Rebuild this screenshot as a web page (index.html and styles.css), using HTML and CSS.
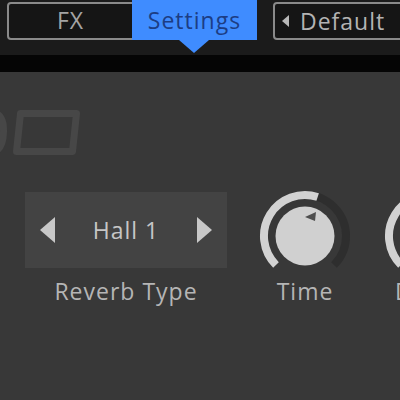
FILE: index.html
```html
<!DOCTYPE html>
<html>
<head>
<meta charset="utf-8">
<link rel="stylesheet" href="styles.css">
</head>
<body>
<div class="app">
  <header class="topbar">
    <div class="tabs">
      <div class="tab">FX</div>
      <div class="tab active">Settings</div>
    </div>
    <div class="preset"><span class="preset-arrow"></span><span class="preset-name">Default</span></div>
  </header>
  <div class="band"></div>
  <main class="panel">
    <svg class="logo" viewBox="0 0 90 50" width="90" height="50">
      <path d="M-7,6.5 Q4,6.5 3.5,25 Q3,44.5 -9,44.5" fill="none" stroke="#474747" stroke-width="7"/>
      <polygon points="20.5,6.5 76.5,6.5 72.5,44.5 16.5,44.5" fill="none" stroke="#474747" stroke-width="7" stroke-linejoin="round"/>
    </svg>
    <div class="controls">
      <div class="control reverb">
        <div class="selector">
          <span class="arrow arrow-left"></span>
          <span class="selector-value">Hall 1</span>
          <span class="arrow arrow-right"></span>
        </div>
        <div class="label">Reverb Type</div>
      </div>
      <div class="control knob">
        <svg class="knob-svg" viewBox="0 0 92 92" width="92" height="92">
          <path d="M17,75 A41,41 0 1 1 75,75" fill="none" stroke="#2e2e2e" stroke-width="8"/>
          <path d="M17,75 A41,41 0 0 1 58.67,7.01" fill="none" stroke="#d2d2d2" stroke-width="8"/>
          <circle cx="46" cy="46" r="29.5" fill="#d0d0d0"/>
          <polygon points="46,27 57,22 56,31" fill="#4e4e4e"/>
        </svg>
        <div class="label">Time</div>
      </div>
      <div class="control knob knob-next">
        <svg class="knob-svg" viewBox="0 0 92 92" width="92" height="92">
          <path d="M17,75 A41,41 0 1 1 75,75" fill="none" stroke="#2e2e2e" stroke-width="8"/>
          <path d="M17,75 A41,41 0 0 1 58.67,7.01" fill="none" stroke="#d2d2d2" stroke-width="8"/>
          <circle cx="46" cy="46" r="29.5" fill="#d0d0d0"/>
          <polygon points="46,27 57,22 56,31" fill="#4e4e4e"/>
        </svg>
        <div class="label">Decay</div>
      </div>
    </div>
  </main>
</div>
</body>
</html>
```
FILE: styles.css
```css
html, body {
  margin: 0;
  padding: 0;
}
body {
  background: #383838;
  font-family: "Open Sans", "DejaVu Sans", sans-serif;
  width: 400px;
  height: 400px;
  overflow: hidden;
}
.app {
  width: 400px;
  height: 400px;
  overflow: hidden;
}
.topbar {
  height: 55px;
  background: #1b1b1b;
  display: flex;
  align-items: flex-start;
  padding-top: 2px;
  box-sizing: border-box;
}
.tabs {
  margin-left: 7px;
  display: flex;
  align-items: flex-start;
  height: 38px;
  border: 2px solid #8a8a8a;
  border-radius: 4px;
  background: #151515;
  box-sizing: border-box;
  flex: none;
}
.tab {
  width: 123px;
  height: 34px;
  line-height: 33px;
  text-align: center;
  font-size: 23px;
  letter-spacing: 1px;
  color: #a4a4a4;
}
.tab.active {
  position: relative;
  width: 125px;
  height: 40px;
  line-height: 40px;
  margin-top: -4px;
  margin-right: -2px;
  background: #3f8cff;
  color: #1c3d84;
}
.tab.active::after {
  content: "";
  position: absolute;
  left: 50%;
  top: 100%;
  margin-left: -16px;
  border-left: 15px solid transparent;
  border-right: 15px solid transparent;
  border-top: 13px solid #3f8cff;
}
.preset {
  flex: none;
  margin-left: 16px;
  width: 160px;
  height: 38px;
  border: 2px solid #8a8a8a;
  border-radius: 4px;
  background: #151515;
  box-sizing: border-box;
  display: flex;
  align-items: center;
  padding-left: 7px;
}
.preset-arrow {
  width: 0;
  height: 0;
  border-top: 6px solid transparent;
  border-bottom: 6px solid transparent;
  border-right: 7px solid #b8b8b8;
}
.preset-name {
  margin-left: 11px;
  font-size: 23px;
  letter-spacing: 1px;
  line-height: 33px;
  color: #b3b3b3;
}
.band {
  height: 17px;
  background: #050505;
}
.panel {
  display: block;
}
.logo {
  display: block;
  margin-top: 35px;
}
.controls {
  display: flex;
  align-items: flex-start;
  margin-top: 35px;
  padding-left: 25px;
}
.control {
  flex: none;
  display: flex;
  flex-direction: column;
  align-items: center;
}
.reverb {
  width: 202px;
}
.selector {
  width: 202px;
  height: 76px;
  box-sizing: border-box;
  background: #434343;
  display: flex;
  align-items: center;
  justify-content: space-between;
  padding: 0 15px;
}
.arrow {
  width: 0;
  height: 0;
  border-top: 13px solid transparent;
  border-bottom: 13px solid transparent;
}
.arrow-left {
  border-right: 15px solid #c8c8c8;
}
.arrow-right {
  border-left: 15px solid #c8c8c8;
}
.selector-value {
  font-size: 23px;
  color: #c6c6c6;
  letter-spacing: 1px;
}
.label {
  margin-top: 10px;
  font-size: 23px;
  letter-spacing: 1px;
  line-height: 26px;
  color: #b5b5b5;
  white-space: nowrap;
}
.knob {
  width: 92px;
  margin-left: 32px;
  margin-top: -2px;
}
.knob .label {
  margin-top: -4px;
}
.knob-next {
  margin-left: 33px;
}
.knob-svg {
  display: block;
}
```
